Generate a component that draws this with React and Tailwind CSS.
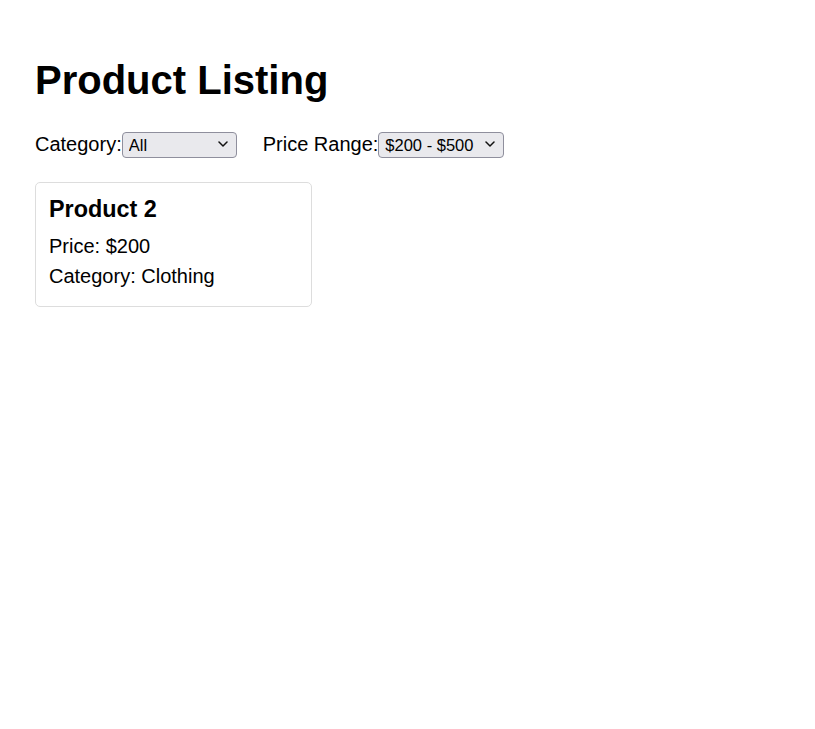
import { useState } from "react";

const products = [
  { id: 1, name: "Product 1", price: 100, category: "Electronics" },
  { id: 2, name: "Product 2", price: 200, category: "Clothing" },
  { id: 3, name: "Product 3", price: 600, category: "Electronics" },
];

const Chevron = () => (
  <svg
    className="pointer-events-none absolute right-[9px] top-1/2 -translate-y-1/2"
    width="10"
    height="6"
    viewBox="0 0 10 6"
    fill="none"
  >
    <path d="M1 1l4 4 4-4" stroke="#111" strokeWidth="1.5" strokeLinecap="round" strokeLinejoin="round" />
  </svg>
);

const Select = ({ value, onChange, options, width }) => (
  <span className={`relative inline-block ${width}`}>
    <select
      value={value}
      onChange={(e) => onChange(e.target.value)}
      className="h-[26px] w-full appearance-none rounded-[4px] border border-[#8f8f9d] bg-[#e9e9ed] pl-[6px] pr-6 text-[16.5px] text-black outline-none"
    >
      {options.map((o) => (
        <option key={o.value} value={o.value}>
          {o.label}
        </option>
      ))}
    </select>
    <Chevron />
  </span>
);

export default function App() {
  const [category, setCategory] = useState("All");
  const [range, setRange] = useState("200-500");

  const [min, max] = range === "All" ? [0, Infinity] : range.split("-").map(Number);
  const shown = products.filter(
    (p) => (category === "All" || p.category === category) && p.price >= min && p.price <= max
  );

  return (
    <div className="min-h-screen bg-white px-[35px] font-['Liberation_Sans',Arial,sans-serif] text-black">
      <h1 className="pt-[57px] text-[40px] font-bold leading-[46px]">Product Listing</h1>

      <div className="mt-[27px] flex h-[27px] items-center text-[20px]">
        <label>Category:</label>
        <Select
          value={category}
          onChange={setCategory}
          width="w-[115px]"
          options={[
            { value: "All", label: "All" },
            { value: "Electronics", label: "Electronics" },
            { value: "Clothing", label: "Clothing" },
          ]}
        />
        <label className="ml-[26px]">Price Range:</label>
        <Select
          value={range}
          onChange={setRange}
          width="w-[126px]"
          options={[
            { value: "All", label: "All" },
            { value: "0-200", label: "$0 - $200" },
            { value: "200-500", label: "$200 - $500" },
            { value: "500-1000", label: "$500 - $1000" },
          ]}
        />
      </div>

      <div className="mt-[25px] flex flex-wrap gap-4">
        {shown.map((p) => (
          <div key={p.id} className="w-[277px] rounded-[5px] border border-[#dddddd] px-[13px] pb-[18px] pt-[13px]">
            <h3 className="text-[23.4px] font-bold leading-[27px]">{p.name}</h3>
            <p className="mt-[12px] text-[20px] leading-[23px]">Price: ${p.price}</p>
            <p className="mt-[7px] text-[20px] leading-[23px]">Category: {p.category}</p>
          </div>
        ))}
      </div>
    </div>
  );
}
